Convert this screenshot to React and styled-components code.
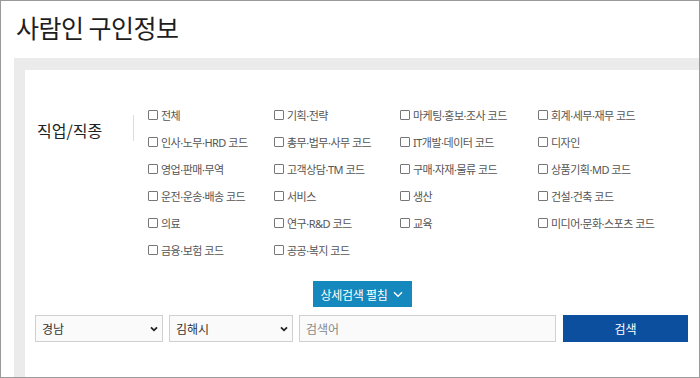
import React from "react";
import styled, { createGlobalStyle } from "styled-components";

const GlobalStyle = createGlobalStyle`
  html, body { margin: 0; padding: 0; background: #fff; }
  body { font-family: "Noto Sans CJK KR", "Noto Sans", sans-serif; }
  * { box-sizing: border-box; }
`;

const jobs = [
  "전체", "기획·전략", "마케팅·홍보·조사 코드", "회계·세무·재무 코드",
  "인사·노무·HRD 코드", "총무·법무·사무 코드", "IT개발·데이터 코드", "디자인",
  "영업·판매·무역", "고객상담·TM 코드", "구매·자재·물류 코드", "상품기획·MD 코드",
  "운전·운송·배송 코드", "서비스", "생산", "건설·건축 코드",
  "의료", "연구·R&D 코드", "교육", "미디어·문화·스포츠 코드",
  "금융·보험 코드", "공공·복지 코드",
];

export default function App() {
  return (
    <>
      <GlobalStyle />
      <Page>
        <Title>사람인 구인정보</Title>
        <Panel>
          <Inner>
            <CategoryRow>
              <Label>직업/직종</Label>
              <Divider />
              <Grid>
                {jobs.map((j) => (
                  <Check key={j}>
                    <Box />
                    <span>{j}</span>
                  </Check>
                ))}
              </Grid>
            </CategoryRow>
            <ToggleWrap>
              <ToggleButton>
                상세검색 펼침
                <svg width="10" height="7" viewBox="0 0 10 7">
                  <path d="M1 1.2 L5 5.2 L9 1.2" fill="none" stroke="#fff" strokeWidth="1.4" />
                </svg>
              </ToggleButton>
            </ToggleWrap>
            <SearchRow>
              <Select $w={128}>
                <span>경남</span>
                <Caret />
              </Select>
              <Select $w={124}>
                <span>김해시</span>
                <Caret />
              </Select>
              <Input placeholder="검색어" />
              <SearchButton>검색</SearchButton>
            </SearchRow>
          </Inner>
        </Panel>
      </Page>
    </>
  );
}

function Caret() {
  return (
    <svg width="8" height="6" viewBox="0 0 8 6">
      <path d="M1 1.3 L4 4.3 L7 1.3" fill="none" stroke="#222" strokeWidth="1.8" />
    </svg>
  );
}

const Page = styled.div`
  width: 700px;
  height: 378px;
  border: 1px solid #9a9a9a;
  overflow: hidden;
  display: flex;
  flex-direction: column;
`;

const Title = styled.h1`
  margin: 0;
  padding: 8px 0 0 15px;
  height: 57px;
  font-size: 25px;
  font-weight: 400;
  color: #1e1e1e;
  letter-spacing: -0.5px;
`;

const Panel = styled.div`
  flex: 1;
  margin-left: 13px;
  background: #ebebeb;
  padding: 12px 0 0 11px;
  display: flex;
`;

const Inner = styled.div`
  flex: 1;
  background: #fff;
  padding: 31px 10px 0 10px;
`;

const CategoryRow = styled.div`
  display: flex;
  align-items: flex-start;
`;

const Label = styled.div`
  width: 98px;
  padding: 17px 0 0 2px;
  font-size: 16px;
  color: #222;
`;

const Divider = styled.div`
  width: 1px;
  height: 26px;
  margin-top: 14px;
  background: #dcdcdc;
`;

const Grid = styled.div`
  margin-left: 14px;
  display: grid;
  grid-template-columns: 126px 126px 138px 140px;
  grid-auto-rows: 27px;
  align-items: center;
`;

const Check = styled.label`
  display: flex;
  align-items: center;
  gap: 3px;
  font-family: "Noto Sans", "Noto Sans CJK KR", sans-serif;
  font-size: 11px;
  color: #555;
  letter-spacing: -0.5px;
  white-space: nowrap;
`;

const Box = styled.span`
  width: 10px;
  height: 10px;
  border: 1px solid #777;
  border-radius: 1px;
  background: #fff;
`;

const ToggleWrap = styled.div`
  display: flex;
  justify-content: center;
  margin-top: 18px;
`;

const ToggleButton = styled.button`
  width: 99px;
  height: 26px;
  border: 0;
  background: #1589bd;
  color: #fff;
  font-family: inherit;
  font-size: 12px;
  display: flex;
  align-items: center;
  justify-content: center;
  gap: 6px;
  letter-spacing: -0.3px;
`;

const SearchRow = styled.div`
  display: flex;
  gap: 6px;
  margin-top: 8px;
  height: 27px;
`;

const Select = styled.div`
  width: ${(p) => p.$w}px;
  border: 1px solid #d0d0d0;
  background: #fafafa;
  display: flex;
  align-items: center;
  justify-content: space-between;
  padding: 0 4px 0 6px;
  font-size: 12px;
  color: #333;
`;

const Input = styled.input`
  width: 257px;
  border: 1px solid #d0d0d0;
  background: #fafafa;
  padding: 0 6px;
  font-family: inherit;
  font-size: 12px;
  outline: none;
  &::placeholder { color: #888; }
`;

const SearchButton = styled.button`
  margin-left: 1px;
  width: 125px;
  border: 0;
  background: #0b4f9e;
  color: #fff;
  font-family: inherit;
  font-size: 12px;
`;
